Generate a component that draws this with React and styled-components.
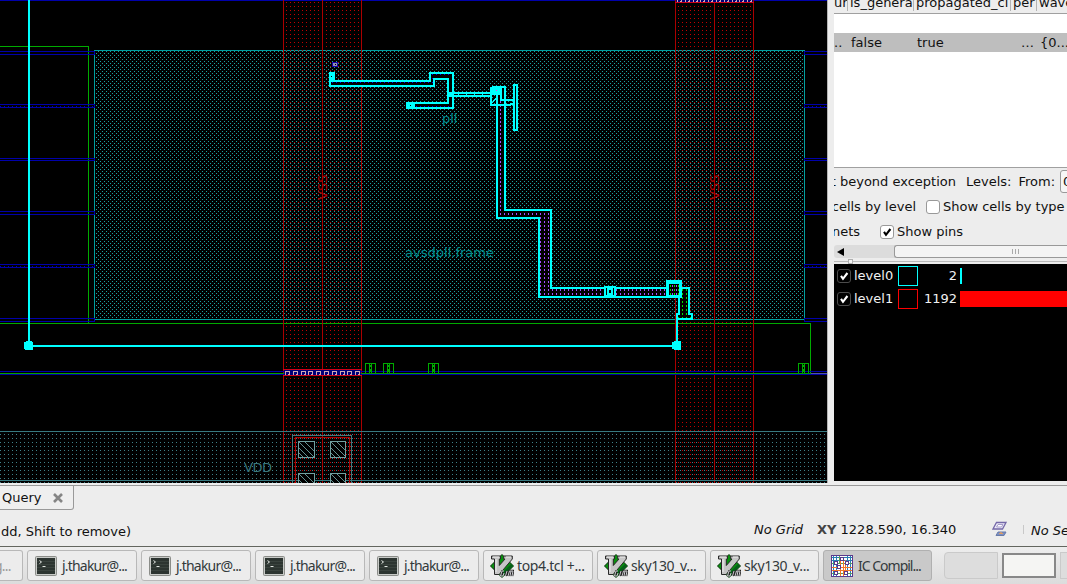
import React from "react";
import styled, { createGlobalStyle, css } from "styled-components";

const Global = createGlobalStyle`
  * { box-sizing: border-box; }
  html, body { margin: 0; padding: 0; overflow: hidden; background: #ededed; }
  body { font: 13px/16px "DejaVu Sans", sans-serif; color: #111; }
`;

const Screen = styled.div`
  width: 1067px;
  height: 584px;
  overflow: hidden;
  display: flex;
  flex-direction: column;
  background: #ededed;
  white-space: nowrap;
`;
const Work = styled.main`
  display: flex;
  height: 483px;
  flex: none;
`;
const LayoutView = styled.svg`
  display: block;
  flex: none;
  width: 827px;
  height: 483px;
  background: #000;
`;
const Splitter = styled.div`
  width: 7px;
  flex: none;
  border-left: 1px solid #b4b4b4;
`;
const Side = styled.aside`
  width: 233px;
  height: 481px;
  overflow: hidden;
  display: flex;
  flex-direction: column;
`;
const HeaderRow = styled.div`
  display: flex;
  align-items: flex-start;
  height: 14px;
  flex: none;
  border-bottom: 1px solid #a0a0a0;
  overflow: hidden;
`;
const HeaderCell = styled.div`
  width: ${(p) => p.$w}px;
  height: 11px;
  flex: none;
  overflow: hidden;
  padding-left: ${(p) => p.$pad ?? 2}px;
  border-right: 1px solid #b4b4b4;
  line-height: 16px;
  span { display: block; margin-top: -5px; }
`;
const Table = styled.div`
  height: 154px;
  flex: none;
  padding-top: 19px;
  background: #fff;
  border-bottom: 1px solid #a0a0a0;
`;
const SelectedRow = styled.div`
  display: flex;
  height: 19px;
  line-height: 19px;
  background: #bebebe;
`;
const Cell = styled.span`
  width: ${(p) => p.$w}px;
  flex: none;
`;
const Options = styled.div`
  height: 77px;
  flex: none;
  padding-top: 1px;
`;
const OptionRow = styled.div`
  display: flex;
  align-items: center;
  height: 25px;
  line-height: 25px;
`;
const Clip = styled.span`
  width: ${(p) => p.$w}px;
  flex: none;
  overflow: hidden;
  display: flex;
  justify-content: flex-end;
`;
const OptionText = styled.span`
  margin-left: ${(p) => p.$ml ?? 3}px;
`;
const Spin = styled.div`
  height: 23px;
  width: 40px;
  flex: none;
  margin-left: 5px;
  padding-left: 2px;
  line-height: 21px;
  border: 1px solid #999;
  border-radius: 3px;
  background: #f6f6f6;
`;
const CheckBox = styled.span`
  display: inline-flex;
  align-items: center;
  justify-content: center;
  width: 14px;
  height: 14px;
  flex: none;
  border: 1px solid ${(p) => (p.$dark ? "#4c4c4c" : "#999")};
  border-radius: 3px;
  background: ${(p) => (p.$dark ? "#000" : "#fff")};
`;
const ScrollBar = styled.div`
  display: flex;
  height: 13px;
  flex: none;
  background: #dcdcdc;
  border-radius: 3px 0 0 3px;
`;
const Arrow = styled.div`
  width: 60px;
  flex: none;
  padding-left: 3px;
  display: flex;
  align-items: center;
`;
const Thumb = styled.div`
  flex: 1;
  display: flex;
  align-items: center;
  justify-content: center;
  gap: 2px;
  padding-left: 69px;
  border: 1px solid #999;
  border-right: 0;
  border-radius: 3px 0 0 3px;
  background: #f4f4f4;
  i { width: 1px; height: 5px; background: #aaa; }
`;
const SplitHandle = styled.div`
  height: 6px;
  flex: none;
  display: flex;
  align-items: center;
  &::before { content: ""; width: 14px; height: 1px; background: #b9b9b9; }
  &::after { content: ""; flex: 1; height: 1px; background: #b9b9b9; }
  i { width: 5px; height: 5px; border: 1px solid #b0b0b0; background: #f4f4f4; }
`;
const Levels = styled.div`
  flex: 1;
  background: #000;
  color: #f0f0f0;
`;
const LevelRow = styled.div`
  display: flex;
  align-items: center;
  height: 23px;
  padding-left: 3px;
`;
const LevelName = styled.span`
  width: 40px;
  margin-left: 3px;
  margin-right: 4px;
`;
const Swatch = styled.span`
  width: 20px;
  height: 20px;
  border: 1px solid ${(p) => p.$c};
`;
const Count = styled.span`
  width: 39px;
  text-align: right;
  margin-right: 3px;
`;
const Bar = styled.span`
  width: ${(p) => p.$w}px;
  height: 16px;
  background: ${(p) => p.$c};
`;

const TabStrip = styled.div`
  height: 27px;
  flex: none;
  margin-top: 2px;
  border-top: 1px solid #999;
`;
const Tab = styled.div`
  width: 74px;
  height: 25px;
  margin-top: -1px;
  padding: 0 10px 0 2px;
  display: flex;
  align-items: center;
  justify-content: space-between;
  border: 1px solid #999;
  border-left: 0;
  border-radius: 0 0 3px 0;
  background: #efefef;
`;
const StatusBar = styled.div`
  display: flex;
  align-items: center;
  height: 34px;
  flex: none;
  > svg { flex: none; }
`;
const StatusItem = styled.span`
  width: ${(p) => p.$w}px;
  flex: none;
  padding-left: ${(p) => p.$pad ?? 0}px;
  padding-top: ${(p) => p.$top ?? 0}px;
  font-style: ${(p) => (p.$italic ? "italic" : "normal")};
  b { color: #444; }
`;
const StatusSep = styled.i`
  width: 1px;
  height: 9px;
  flex: none;
  margin-left: 15px;
  background: #c8c8c8;
`;
const TaskBar = styled.footer`
  display: flex;
  height: 38px;
  flex: none;
  padding-top: 3px;
  border-top: 1px solid #63665f;
  background: linear-gradient(#ededed, #dcdcdc);
`;
const task = css`
  height: 31px;
  flex: none;
  border: 1px solid #b8b8b8;
  border-radius: 3px;
  background: #ececec;
`;
const Task = styled.div`
  ${task}
  width: ${(p) => p.$w}px;
  margin-right: 4px;
  padding-left: ${(p) => p.$pad ?? 7}px;
  display: flex;
  align-items: center;
  gap: ${(p) => p.$gap ?? 5}px;
  color: #333a3c;
  font: 14px/20px "Noto Sans", sans-serif;
  letter-spacing: ${(p) => p.$track}px;
  ${(p) => p.$active && "background: #c9c9c9; border-color: #b0b0b0;"}
`;
const TaskStub = styled.div`
  ${task}
  width: 23px;
  margin-right: 4px;
  border-left: 0;
  border-radius: 0 3px 3px 0;
  overflow: hidden;
  color: #999;
  font: 14px/29px "Noto Sans", sans-serif;
  letter-spacing: -0.8px;
  span { display: block; margin-left: -6px; }
`;
const Pager = styled.div`
  display: flex;
  gap: 4px;
  margin: 2px 0 0 8px;
`;
const Desk = styled.div`
  width: ${(p) => p.$w ?? 54}px;
  height: 27px;
  flex: none;
  border: 1px solid #cacaca;
  border-radius: ${(p) => (p.$first ? "4px 0 0 4px" : "0")};
  background: #dddddd;
  ${(p) =>
    p.$current &&
    "border: 2px solid #888; background: #f5f5f3; height: 25px; margin-top: 1px;"}
`;

const Check = ({ dark }) => (
  <svg width="10" height="10" viewBox="0 0 10 10">
    <path d="M2 4.8 4 7.8 8.4 2" fill="none" stroke={dark ? "#fff" : "#000"} strokeWidth="2.1" />
  </svg>
);

const TerminalIcon = () => (
  <svg width="22" height="20" viewBox="0 0 22 20">
    <rect x=".5" y=".5" width="21" height="19" rx="1" fill="#c8cac7" stroke="#8b8d89" />
    <rect x="2" y="2" width="18" height="16" fill="#2c3430" />
    <path d="M2 5.5h18M2 8.5h18M2 11.5h18M2 14.5h18" stroke="#3e4843" strokeWidth=".8" />
    <path d="m4.500 4.500 2 1.500-2 1.500M7.500 10.500h3" stroke="#e4e8e4" fill="none" />
  </svg>
);

const VimIcon = () => (
  <svg width="24" height="24" viewBox="0 0 24 24">
    <path d="M12 0.500 23.500 12 12 23.500.500 12Z" fill="#08900e" stroke="#062e08" />
    <path d="m12 23 11-11-2-2-11 11z" fill="#06601a" />
    <path d="M1.500 2h9v3H9.300v6.500L15 5h-1.300V2h8.600v3L9.200 20.500H4.500V5h-3Z" fill="#c6c6c6" stroke="#292929" strokeWidth="1" />
    <path d="M3 3h6M6 5v13M16 3h5" stroke="#eee" strokeWidth="1" />
    <path d="m12.500 16.500-1.500 6M15.500 22l1.500-5M18 22l1.500-5h1.500l-1 5M21 17h2l-1 5" fill="none" stroke="#222" strokeWidth="2.600" />
    <path d="M14 17h-2l-1.500 5h2.500l1-3M15.500 22l1.500-5M18 22l1.500-5h1.500l-1 5M21 17h2l-1 5" fill="none" stroke="#c8c8cc" strokeWidth="1" />
  </svg>
);

const ChipIcon = () => (
  <svg width="22" height="22" viewBox="0 0 22 22" shapeRendering="crispEdges">
    <path fill="#fff" d="M0 0h22v22H0z" />
    <path d="M2.500 0v22M5.500 0v22M16.500 0v22M19.500 0v22M0 2.500h22M0 5.500h22" stroke="#287fb4" />
    <path d="M0 8.500h22M0 18.500h22M8.500 0v8" stroke="#5ba055" />
    <path d="M9.500 5v17M12.500 5v17M0 12.500h22M0 15.500h22M14.500 5v10" stroke="#f17628" />
    <g fill="#fff" stroke="#5b3a8d">
      <path d="M9.500 2.500h3v3h-3zM3.500 6.500h3v3h-3zM14.500 6.500h3v3h-3zM6.500 10.500h3v3h-3zM3.500 16.500h3v3h-3zM13.500 16.500h3v3h-3z" />
      <path fill="none" d="M.500.500h21v21H.500z" />
    </g>
  </svg>
);

const SelectIcon = () => (
  <svg width="16" height="16" viewBox="0 0 16 16">
    <path d="M4.500 1.500H14L10.500 8H1Z" fill="#eeecf8" stroke="#7468a8" strokeWidth="1.300" />
    <path d="M6 3.500h5L9.500 6H4.500Z" fill="#fff" stroke="#a69dcb" />
    <path d="M6 11h8l-2 3.500H4Z" fill="#7b91c2" stroke="#687baa" />
    <path d="m7 13 2-1.500 2 1.500" fill="#e4a064" stroke="#e4a064" />
  </svg>
);

const STUBS = [[51, 54], [104, 107, 1], [158, 160], [211, 214], [264, 267, 1], [318, 321]];

const Device = ({ x }) => (
  <g transform={`translate(${x} 363)`} fill="none" stroke="#00aa00">
    <path d="M.5 10V.5h10V10M4.500 1V10M6.500 1V10M5.500 2V4M5.500 6V9" />
  </g>
);

const Rail = ({ x }) => (
  <g>
    <rect x={x} y="0" width="79" height="483" fill="url(#redDots)" />
    <path d={`M${x + 0.5} 0V483M${x + 39.5} 0V483M${x + 78.5} 0V483`} stroke="#aa0000" />
  </g>
);

const ViaRow = ({ x, y }) => (
  <g fill="none">
    <rect x={x + 1} y={y} width="77" height="7" fill="#00007a" />
    <path d={`M${x} ${y + 0.5}h79M${x} ${y + 6.5}h79`} stroke="#d00018" />
    {Array.from({ length: 10 }, (_, i) => (
      <path
        key={i}
        d={`M${x + 2.5 + Math.round(i * 7.8)} ${y + 6}v-3.500h4v3h-2`}
        stroke="#d0a8b4"
      />
    ))}
  </g>
);

const Contact = ({ x, y, w }) => (
  <g stroke="#70a0a0" fill="none">
    <rect x={x} y={y} width={w} height="17" fill="#000" stroke="none" />
    <rect x={x + 0.5} y={y + 0.5} width={w - 1} height="16" />
    <path
      shapeRendering="auto"
      strokeWidth=".9"
      d={`M${x + 1} ${y + 1}l15 15M${x + 7} ${y + 1}l${w - 8} ${w - 8}M${x + 1} ${y + 7}l9 9M${x + 1} ${y + 12}l4 4`}
    />
  </g>
);

const ChipLayout = () => (
  <LayoutView viewBox="0 0 827 483" shapeRendering="crispEdges">
    <defs>
      <pattern id="redDots" width="4" height="4" patternUnits="userSpaceOnUse">
        <rect x="2" y="2" width="1" height="1" fill="#c00000" />
      </pattern>
      <pattern id="frameDots" width="4" height="4" patternUnits="userSpaceOnUse">
        <path fill="#1aa0a0" d="M0 1h1v1H0zM2 3h1v1H2z" />
      </pattern>
      <pattern id="bandDots" width="4" height="4" patternUnits="userSpaceOnUse">
        <rect x="0" y="2" width="1" height="1" fill="#3f8088" />
      </pattern>
      <pattern id="blueDots" width="4" height="4" patternUnits="userSpaceOnUse">
        <rect x="0" y="2" width="1" height="1" fill="#0000ff" />
      </pattern>
      <pattern id="violetDots" width="4" height="4" patternUnits="userSpaceOnUse">
        <rect x="0" y="1" width="1" height="2" fill="#a44cff" />
      </pattern>
      <pattern id="greenDots" width="4" height="4" patternUnits="userSpaceOnUse">
        <rect x="2" y="1" width="1" height="2" fill="#00e000" />
      </pattern>
    </defs>

    <path d="M0 .5H827" stroke="#0000aa" />
    <rect x="95" y="51" width="709" height="268" fill="url(#frameDots)" />
    <path d="M94.500 50.500H804.500V319.500H94.500Z" fill="none" stroke="#00a0a0" />
    <path d="M0 46.500H88.500V323M0 323.500H810.500V373" fill="none" stroke="#00aa00" />
    {STUBS.map(([a, b, dotted]) => (
      <g key={a} fill="none" stroke="#0000aa">
        <path d={`M0 ${a + 0.5}H94.500V${b + 0.5}H0M827 ${a + 0.5}H804.500V${b + 0.5}H827`} />
        {dotted && <path strokeDasharray="1 3" d={`M0 ${a + 2.5}H94M804 ${a + 2.5}H827`} />}
      </g>
    ))}

    <rect x="0" y="432" width="827" height="51" fill="url(#bandDots)" />
    <Rail x={283} />
    <Rail x={675} />
    <path d="M0 431.500H827M0 480.500H827" stroke="#377980" />
    <path d="M0 371.500H827M0 374.500H827" stroke="#0000aa" />
    <path d="M0 373.500H811" stroke="#00a000" />
    <path d="M811 373.500H827" stroke="#5058a0" />
    <ViaRow x={283} y={369} />
    <ViaRow x={675} y={-4} />
    {[365, 383, 428, 798].map((x) => <Device key={x} x={x} />)}

    <path d="M292.500 483V435.500H351.500V483" fill="none" stroke="#46797c" />
    <path d="M295.500 483V437.500H349.500V483" fill="none" stroke="#aa0000" />
    <Contact x={298} y={441} w={17} />
    <Contact x={330} y={441} w={16} />
    <Contact x={298} y={473} w={17} />
    <Contact x={330} y={473} w={16} />

    <g fontFamily='"DejaVu Sans", sans-serif' fontSize="13">
      <text x="442" y="123" fill="#008f8f">pll</text>
      <text x="405" y="257" fill="#008f8f" textLength="89">avsdpll.frame</text>
      <text x="244" y="472" fill="#39767c" textLength="28">VDD</text>
      <text transform="translate(327 200) rotate(-90)" fill="#aa0000">VSS</text>
      <text transform="translate(719 200) rotate(-90)" fill="#aa0000">VSS</text>
    </g>

    <rect x="332.500" y="62.500" width="5" height="4" fill="#9090b0" stroke="#1800aa" strokeWidth="1" />
    <rect x="335" y="64" width="1" height="1" fill="#000" />

    <g fill="none" stroke="#00ffff" strokeWidth="2">
      <path fill="#000" d="M330 73H334V81H430V73H453V108H408V103H448V79H434V86H330Z" />
      <path fill="url(#blueDots)" d="M330 73H334V81H430V73H453V108H408V103H448V79H434V86H330Z" />
      <path fill="#000" d="M497 87H505V210H551V288H668V297H539V218H497Z" />
      <path fill="url(#violetDots)" d="M497 87H505V210H551V288H668V297H539V218H497Z" />
      <path d="M453 93H491M453 96H491M491 87V105H511M501 87V100H514M510 104H514" />
      <path strokeWidth="1" strokeDasharray="1 7" d="M458 94.500H491" />
      <path fill="#000" d="M514 85H517V130H514Z" />
      <path strokeWidth="1" d="M492 103l5-6" />
      <path fill="#000" d="M605 287H615V296H605Z" />
      <path fill="#000" d="M608 289H612V294H608Z" />
      <path fill="#000" d="M680 288H689V314H692V319H677V314H679V298Z" />
      <path fill="url(#greenDots)" d="M680 288H689V314H692V319H677V314H679V298Z" />
      <path d="M29 0V346H677V319" />
    </g>
    <g fill="#00ffff">
      <path d="M329 72h6v10h-6zM406 102h9v7h-9zM447 92h7v5h-7zM491 87l1-1h9v9h-10zM666 280h16v18h-16z" />
      <path d="M26 341h6v1h1v8h-8v-1h-1v-7h2zM674 341h7v9h-7v-1h-2v-7h2z" />
    </g>
    <path d="M331 76h1v1h-1zM410 105h1v1h-1zM669 284h10v11h-10z" />
    <path d="M669 284h10v11h-10z" fill="url(#greenDots)" />
    <path d="M669 284h10v11h-10z" fill="url(#violetDots)" />
    <path d="M496 90h1v1h-1z" fill="#ff30e0" />
  </LayoutView>
);

const Header = ({ w, pad, children }) => (
  <HeaderCell $w={w} $pad={pad}><span>{children}</span></HeaderCell>
);

const SidePanel = () => (
  <Side>
    <HeaderRow>
      <Header w={14} pad={0}>ur</Header>
      <Header w={66}>is_genera</Header>
      <Header w={97}>propagated_cl</Header>
      <Header w={26}>per</Header>
      <Header w={60}>wave</Header>
    </HeaderRow>
    <Table>
      <SelectedRow>
        <Cell $w={17}>..</Cell>
        <Cell $w={66}>false</Cell>
        <Cell $w={104}>true</Cell>
        <Cell $w={19}>…</Cell>
        <Cell $w={40}>{"{0..."}</Cell>
      </SelectedRow>
    </Table>
    <Options>
      <OptionRow>
        <Clip $w={122}>t beyond exception</Clip>
        <OptionText $ml={10}>Levels:</OptionText>
        <OptionText $ml={7}>From:</OptionText>
        <Spin>0</Spin>
      </OptionRow>
      <OptionRow>
        <Clip $w={82}>cells by level</Clip>
        <OptionText $ml={10} />
        <CheckBox />
        <OptionText>Show cells by type</OptionText>
      </OptionRow>
      <OptionRow>
        <Clip $w={26}>nets</Clip>
        <OptionText $ml={20} />
        <CheckBox><Check /></CheckBox>
        <OptionText>Show pins</OptionText>
      </OptionRow>
    </Options>
    <ScrollBar>
      <Arrow><svg width="7" height="8"><path d="M7 0v8L0 4z" /></svg></Arrow>
      <Thumb><i /><i /><i /></Thumb>
    </ScrollBar>
    <SplitHandle><i /></SplitHandle>
    <Levels>
      <LevelRow>
        <CheckBox $dark><Check dark /></CheckBox>
        <LevelName>level0</LevelName>
        <Swatch $c="#00ffff" />
        <Count>2</Count>
        <Bar $w={2} $c="#00ffff" />
      </LevelRow>
      <LevelRow>
        <CheckBox $dark><Check dark /></CheckBox>
        <LevelName>level1</LevelName>
        <Swatch $c="#ff0000" />
        <Count>1192</Count>
        <Bar $w={107} $c="#ff0000" />
      </LevelRow>
    </Levels>
  </Side>
);

const terminal = { w: 110, icon: <TerminalIcon />, label: "j.thakur@...", track: -0.8 };
const vim = { icon: <VimIcon />, track: -0.35, pad: 6, gap: 3 };

const TASKS = [
  terminal,
  terminal,
  terminal,
  terminal,
  { ...vim, w: 110, label: "top4.tcl +..." },
  { ...vim, w: 109, label: "sky130_v..." },
  { ...vim, w: 109, label: "sky130_v..." },
  { w: 109, icon: <ChipIcon />, label: "IC Compil...", track: -1, active: true },
];

export default function App() {
  return (
    <>
      <Global />
      <Screen>
        <Work>
          <ChipLayout />
          <Splitter />
          <SidePanel />
        </Work>
        <TabStrip>
          <Tab>
            Query
            <svg width="10" height="10"><path d="m1 1 8 8M9 1 1 9" stroke="#858585" strokeWidth="2.600" /></svg>
          </Tab>
        </TabStrip>
        <StatusBar>
          <StatusItem $w={754} $pad={1} $top={5}>dd, Shift to remove)</StatusItem>
          <StatusItem $w={63} $top={2} $italic>No Grid</StatusItem>
          <StatusItem $w={175} $top={2}><b>XY</b> 1228.590, 16.340</StatusItem>
          <SelectIcon />
          <StatusSep />
          <StatusItem $w={60} $pad={7} $top={3} $italic>No Sel</StatusItem>
        </StatusBar>
        <TaskBar>
          <TaskStub><span>g...</span></TaskStub>
          {TASKS.map((t, i) => (
            <Task key={i} $w={t.w} $active={t.active} $track={t.track} $pad={t.pad} $gap={t.gap}>
              {t.icon}
              <span>{t.label}</span>
            </Task>
          ))}
          <Pager>
            <Desk $first />
            <Desk $current />
            <Desk $w={30} />
          </Pager>
        </TaskBar>
      </Screen>
    </>
  );
}
